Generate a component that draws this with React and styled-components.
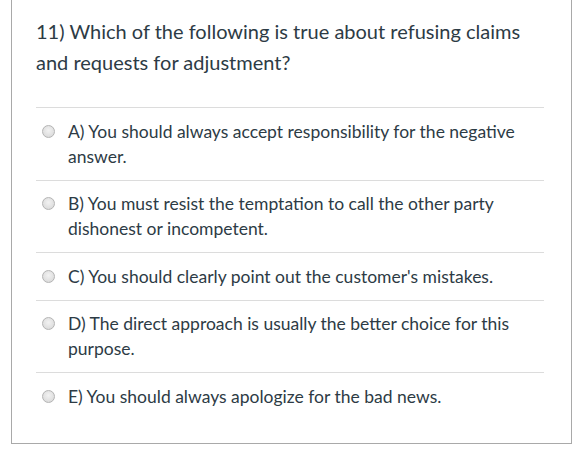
import React from "react";
import styled, { createGlobalStyle } from "styled-components";

const Global = createGlobalStyle`
  html, body { margin: 0; padding: 0; background: #ffffff; }
  body { font-family: Lato, "Noto Sans", sans-serif; color: #2d3b45; }
`;

const Card = styled.div`
  box-sizing: border-box;
  margin-left: 11px;
  width: 561px;
  height: 444px;
  border: 1px solid #a9a9a9;
  border-top: none;
  padding: 0 27px 0 24px;
  background: #fff;
`;

const Question = styled.div`
  font-size: 20px;
  line-height: 31px;
  padding-top: 16px;
  padding-bottom: 29px;
`;

const Answers = styled.div`
  display: flex;
  flex-direction: column;
`;

const Row = styled.label`
  display: flex;
  align-items: flex-start;
  border-top: 1px solid #dcdcdc;
  padding: 10.5px 0 11px 6px;
  font-size: 17.5px;
  line-height: 25px;
`;

const Radio = styled.span`
  flex: none;
  box-sizing: border-box;
  width: 13px;
  height: 13px;
  margin-top: 6px;
  margin-right: 13px;
  border-radius: 50%;
  border: 1px solid #b4b4b4;
  background: radial-gradient(circle at 50% 40%, #f2f2f2 0%, #dedede 70%, #d2d2d2 100%);
`;

const AnswerText = styled.span`
  flex: 1;
`;

const answers = [
  "A) You should always accept responsibility for the negative answer.",
  "B) You must resist the temptation to call the other party dishonest or incompetent.",
  "C) You should clearly point out the customer's mistakes.",
  "D) The direct approach is usually the better choice for this purpose.",
  "E) You should always apologize for the bad news.",
];

export default function App() {
  return (
    <>
      <Global />
      <Card>
        <Question>
          11) Which of the following is true about refusing claims and requests for adjustment?
        </Question>
        <Answers>
          {answers.map((a) => (
            <Row key={a}>
              <Radio />
              <AnswerText>{a}</AnswerText>
            </Row>
          ))}
        </Answers>
      </Card>
    </>
  );
}
